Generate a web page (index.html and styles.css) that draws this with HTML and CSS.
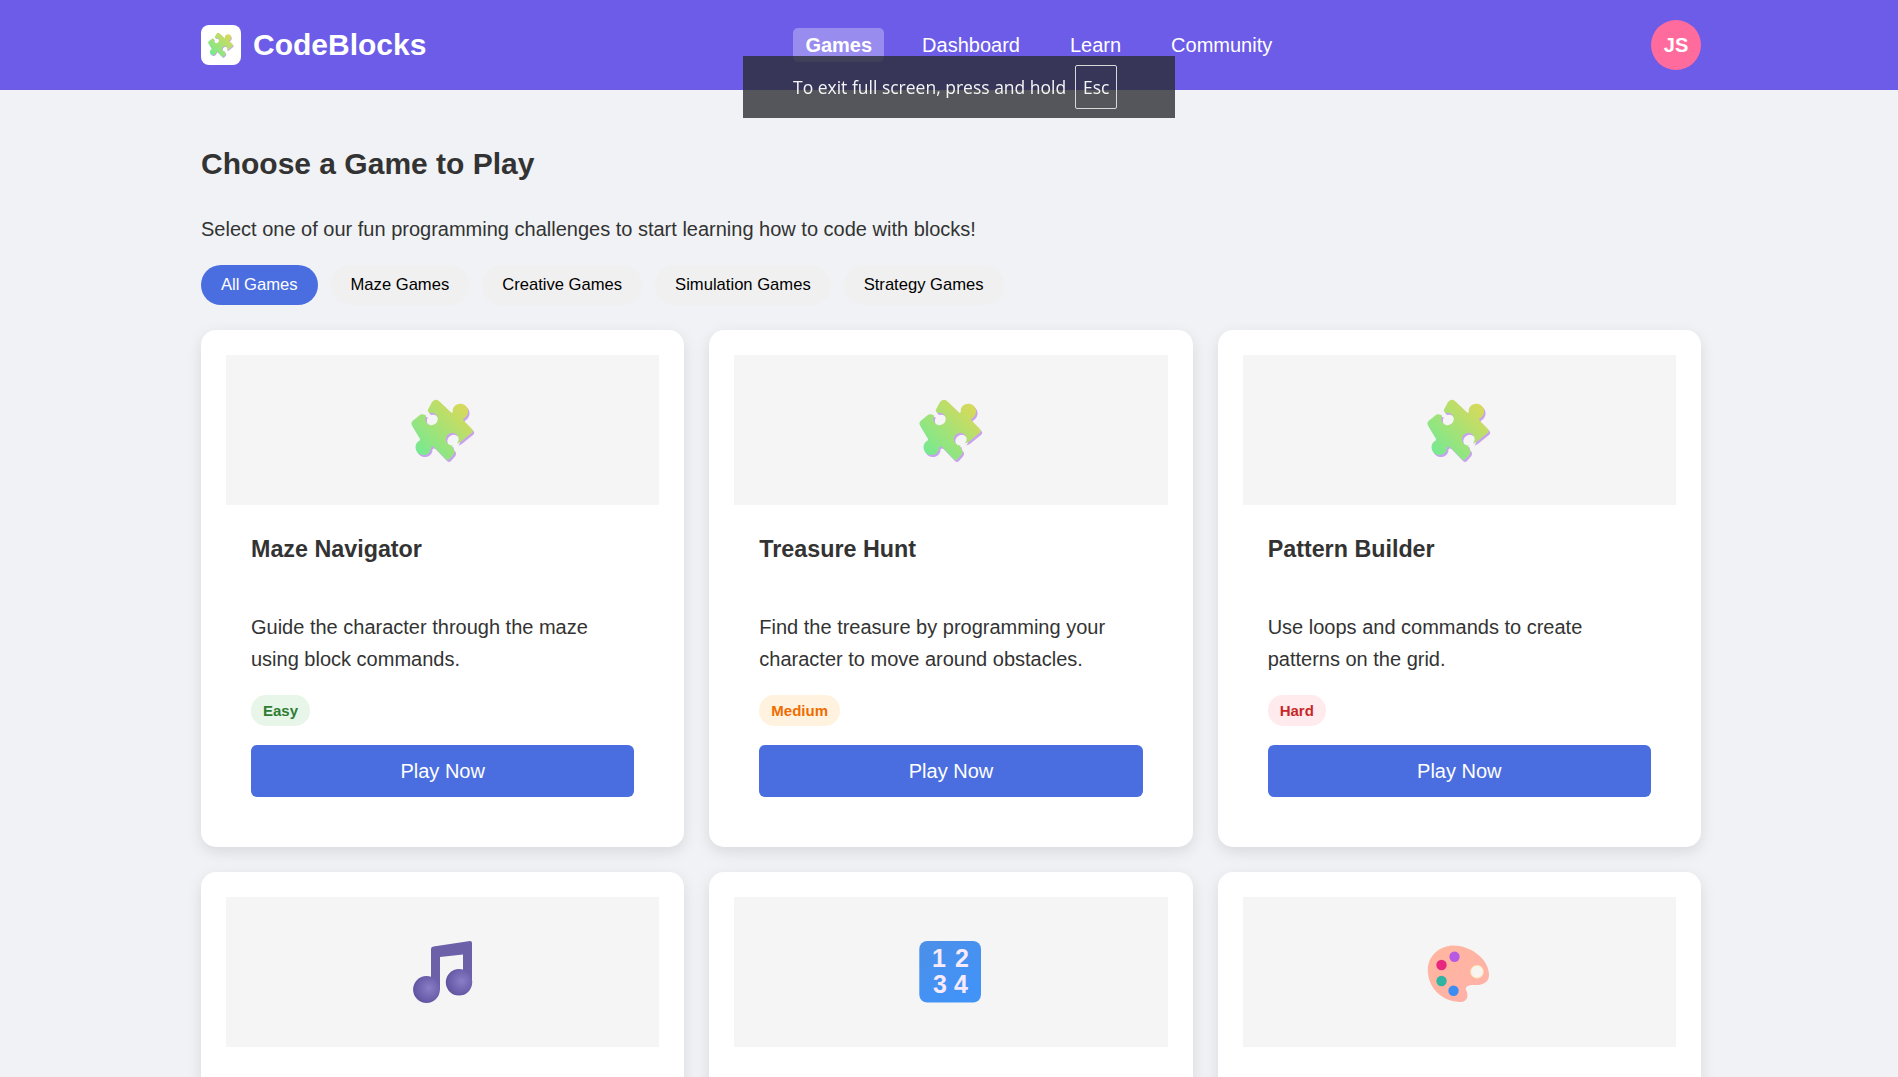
FILE: index.html
```html
<!DOCTYPE html>
<html lang="en">
<head>
    <meta charset="UTF-8">
    <title>CodeBlocks - Games</title>
    <link rel="stylesheet" href="styles.css">
</head>
<body>
<header class="navbar">
    <div class="wrap navbar-inner">
        <a class="logo">
            <span class="logo-icon">
                <svg class="logo-svg" viewBox="20.5 18 64 64">
                    <defs>
                        <linearGradient id="puzzleFill" x1="0" y1="1" x2="1" y2="0">
                            <stop offset="0.1" stop-color="#74ea92"/>
                            <stop offset="0.85" stop-color="#d4da5c"/>
                        </linearGradient>
                        <path id="puzzleShape" d="M37.5 29.5 L41.5 22 Q45 18 48.5 21 L60.5 32.5 Q62.8 33.5 62.2 29.6 A7.8 7.8 0 1 1 74.2 37.9 Q71.5 38.5 73.5 41 L81 48.5 Q83.5 51 81 53 L70.5 61.5 Q68.5 63 66.5 63.5 A6.4 6.4 0 1 0 62 65.6 Q61 67.5 63.5 70 Q65 72 63 74.5 L59 79 Q57 81 55 79 L43.5 67 Q40 65.2 40.4 69.2 A7.8 7.8 0 1 1 27.6 61.5 Q30.5 60.5 29 58 L21.5 45.5 Q20 42.5 22.5 40.5 L30 34.5 Q33.5 33.5 35.8 35.7 A6.2 6.2 0 1 0 39.3 33 Q36.5 32 37.5 29.5 Z"/>
                        <g id="puzzle">
                            <use href="#puzzleShape" x="1.5" y="2" fill="#c9a2ee"/>
                            <use href="#puzzleShape" fill="url(#puzzleFill)"/>
                        </g>
                    </defs>
                    <use href="#puzzle"/>
                </svg>
            </span>
            <span class="logo-text">CodeBlocks</span>
        </a>
        <nav class="nav-links">
            <a class="nav-link active">Games</a>
            <a class="nav-link">Dashboard</a>
            <a class="nav-link">Learn</a>
            <a class="nav-link">Community</a>
        </nav>
        <div class="avatar">JS</div>
    </div>
</header>

<main class="wrap content">
    <h1 class="page-title">Choose a Game to Play</h1>
    <p class="page-intro">Select one of our fun programming challenges to start learning how to code with blocks!</p>

    <div class="filters">
        <button class="filter active">All Games</button>
        <button class="filter">Maze Games</button>
        <button class="filter">Creative Games</button>
        <button class="filter">Simulation Games</button>
        <button class="filter">Strategy Games</button>
    </div>

    <section class="game-grid">
        <article class="game-card">
            <div class="game-image">
                <svg class="game-icon" viewBox="20.5 18 64 64"><use href="#puzzle"/></svg>
            </div>
            <div class="game-body">
                <h3 class="game-title">Maze Navigator</h3>
                <p class="game-desc">Guide the character through the maze using block commands.</p>
                <span class="badge easy">Easy</span>
                <button class="play-btn">Play Now</button>
            </div>
        </article>
        <article class="game-card">
            <div class="game-image">
                <svg class="game-icon" viewBox="20.5 18 64 64"><use href="#puzzle"/></svg>
            </div>
            <div class="game-body">
                <h3 class="game-title">Treasure Hunt</h3>
                <p class="game-desc">Find the treasure by programming your character to move around obstacles.</p>
                <span class="badge medium">Medium</span>
                <button class="play-btn">Play Now</button>
            </div>
        </article>
        <article class="game-card">
            <div class="game-image">
                <svg class="game-icon" viewBox="20.5 18 64 64"><use href="#puzzle"/></svg>
            </div>
            <div class="game-body">
                <h3 class="game-title">Pattern Builder</h3>
                <p class="game-desc">Use loops and commands to create patterns on the grid.</p>
                <span class="badge hard">Hard</span>
                <button class="play-btn">Play Now</button>
            </div>
        </article>

        <article class="game-card">
            <div class="game-image">
                <svg class="game-icon" viewBox="20.5 15 64 64">
                    <defs>
                        <radialGradient id="noteHead" cx="0.6" cy="0.45" r="0.6">
                            <stop offset="0" stop-color="#8a7ec8"/>
                            <stop offset="1" stop-color="#6053a0"/>
                        </radialGradient>
                    </defs>
                    <path d="M40.5 24 Q40.5 22 43 21.6 L79.5 16 Q81.5 16 81.5 18 V58 H72.5 V29.5 L49.5 32 V65 H40.5 Z" fill="#6c60a8"/>
                    <circle cx="36" cy="64.5" r="13.4" fill="url(#noteHead)"/>
                    <circle cx="68.5" cy="57.3" r="13.2" fill="url(#noteHead)"/>
                </svg>
            </div>
        </article>
        <article class="game-card">
            <div class="game-image">
                <svg class="game-icon" viewBox="19 15 64 64">
                    <defs>
                        <linearGradient id="keypadFill" x1="0" y1="0" x2="0.6" y2="1">
                            <stop offset="0" stop-color="#4c8fe8"/>
                            <stop offset="1" stop-color="#4193f8"/>
                        </linearGradient>
                    </defs>
                    <rect x="19.3" y="16" width="61.7" height="61.5" rx="8" fill="url(#keypadFill)"/>
                    <text class="keypad-digit" x="39" y="42">1</text>
                    <text class="keypad-digit" x="62" y="42">2</text>
                    <text class="keypad-digit" x="40" y="68">3</text>
                    <text class="keypad-digit" x="61" y="68">4</text>
                </svg>
            </div>
        </article>
        <article class="game-card">
            <div class="game-image">
                <svg class="game-icon" viewBox="17.5 15 64 64">
                    <defs>
                        <linearGradient id="paletteFill" x1="0" y1="0" x2="1" y2="1">
                            <stop offset="0" stop-color="#ffb79f"/>
                            <stop offset="1" stop-color="#ffb0a8"/>
                        </linearGradient>
                    </defs>
                    <path d="M18.3 45 C18.3 30 31 20.5 44 20.5 C60 20.5 79.5 33 79.5 50 C79.5 58 72 60.5 65 60 C58 59.5 55 62 57 66 C59 70 58.5 77 51 77 C33 77 18.3 63 18.3 45 Z" fill="url(#paletteFill)"/>
                    <circle cx="67.5" cy="46.7" r="6.5" fill="#f8f5f0" stroke="#ffd9a0" stroke-width="1"/>
                    <circle cx="45" cy="31.7" r="5.2" fill="#b65ae4"/>
                    <circle cx="32" cy="40" r="5.2" fill="#e8277f"/>
                    <circle cx="32" cy="56" r="5.2" fill="#2fb3a2"/>
                    <circle cx="44" cy="65.7" r="5.2" fill="#3d8cf2"/>
                </svg>
            </div>
        </article>
    </section>
</main>

<div class="fullscreen-toast">
    <span>To exit full screen, press and hold</span>
    <kbd class="esc-key">Esc</kbd>
</div>
</body>
</html>
```

FILE: styles.css
```css
* {
    box-sizing: border-box;
    margin: 0;
    padding: 0;
}
html, body {
    height: 100%;
    overflow: hidden;
}
body {
    background: #f0f2f5;
    color: #333;
    font-family: "Liberation Sans", Arial, sans-serif;
}
.wrap {
    width: 1500px;
    margin-left: 201px;
}

/* top bar */
.navbar {
    height: 90px;
    background: #6c5ce7;
    color: #fff;
}
.navbar-inner {
    height: 100%;
    display: flex;
    align-items: center;
}
.logo {
    display: flex;
    align-items: center;
    gap: 12px;
}
.logo-icon {
    width: 40px;
    height: 40px;
    display: flex;
    align-items: center;
    justify-content: center;
    background: #fff;
    border-radius: 8px;
}
.logo-svg {
    width: 26px;
    height: 26px;
}
.logo-text {
    font-size: 30px;
    font-weight: 700;
}
.nav-links {
    display: flex;
    gap: 26px;
    margin-left: 367px;
}
.nav-link {
    padding: 8px 12px;
    border-radius: 5px;
    font-size: 20px;
    line-height: 18px;
}
.nav-link.active {
    background: rgba(255, 255, 255, 0.3);
    font-weight: 700;
}
.avatar {
    width: 50px;
    height: 50px;
    margin-left: auto;
    display: flex;
    align-items: center;
    justify-content: center;
    background: #ff6b9d;
    border-radius: 50%;
    font-size: 20px;
    font-weight: 700;
}

/* page head */
.content {
    padding-top: 56px;
}
.page-title {
    font-size: 30px;
    line-height: 36px;
    color: #333;
}
.page-intro {
    margin-top: 31px;
    font-size: 20px;
    line-height: 32px;
}
.filters {
    display: flex;
    gap: 13px;
    margin-top: 20px;
}
.filter {
    height: 40px;
    padding: 0 20px;
    border: none;
    border-radius: 20px;
    background: #f0f0f0;
    color: #000;
    font-family: inherit;
    font-size: 16.6px;
}
.filter.active {
    background: #4a6ee0;
    color: #fff;
}

/* cards */
.game-grid {
    display: grid;
    grid-template-columns: repeat(3, 1fr);
    grid-auto-rows: 517px;
    gap: 25px;
    margin-top: 25px;
}
.game-card {
    padding: 25px;
    background: #fff;
    border-radius: 15px;
    box-shadow: 0 5px 15px rgba(0, 0, 0, 0.1);
}
.game-image {
    height: 150px;
    display: flex;
    align-items: center;
    justify-content: center;
    background: #f5f5f5;
}
.game-icon {
    width: 64px;
    height: 64px;
}
.keypad-digit {
    fill: #f7eafc;
    font-family: "Liberation Sans", Arial, sans-serif;
    font-size: 25px;
    font-weight: 700;
    text-anchor: middle;
}
.game-body {
    padding: 25px;
}
.game-title {
    font-size: 23.3px;
    line-height: 38px;
}
.game-desc {
    margin-top: 43px;
    font-size: 20px;
    line-height: 32px;
}
.badge {
    display: inline-block;
    margin-top: 20px;
    padding: 0 12px;
    height: 31px;
    border-radius: 15px;
    font-size: 15px;
    font-weight: 700;
    line-height: 31px;
}
.badge.easy {
    background: #e8f5e9;
    color: #2e7d32;
}
.badge.medium {
    background: #fff3e0;
    color: #ef6c00;
}
.badge.hard {
    background: #ffebee;
    color: #c62828;
}
.play-btn {
    display: block;
    width: 100%;
    height: 52px;
    margin-top: 19px;
    border: none;
    border-radius: 6px;
    background: #4a6ee0;
    color: #fff;
    font-family: inherit;
    font-size: 20px;
}

/* browser message on top of the page */
.fullscreen-toast {
    position: fixed;
    top: 56px;
    left: 743px;
    width: 432px;
    height: 62px;
    padding-left: 50px;
    display: flex;
    align-items: center;
    gap: 9px;
    background: rgba(40, 42, 48, 0.78);
    color: #f5f5f5;
    font-family: "Open Sans", sans-serif;
    font-size: 17.5px;
}
.esc-key {
    width: 42px;
    height: 44px;
    display: flex;
    align-items: center;
    justify-content: center;
    border: 1px solid #d8d8d8;
    border-radius: 2px;
    font-family: inherit;
    font-size: 17.5px;
}
```
